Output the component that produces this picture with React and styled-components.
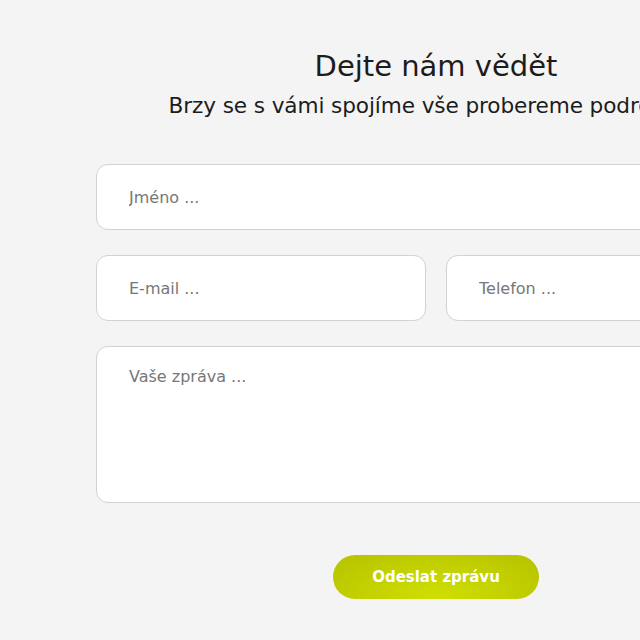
import React from "react";
import styled, { createGlobalStyle } from "styled-components";

const Global = createGlobalStyle`
  html, body { margin: 0; padding: 0; background: #f4f4f4; overflow: hidden; }
  body { font-family: "DejaVu Sans", "Open Sans", sans-serif; }
`;

const Page = styled.div`
  width: 872px;
  min-height: 640px;
  background: #f4f4f4;
  padding-top: 46px;
  box-sizing: border-box;
`;

const Header = styled.header`
  text-align: center;
  color: #1c1c1c;
`;

const Title = styled.h1`
  margin: 0;
  font-size: 29px;
  font-weight: 400;
  line-height: 40px;
`;

const Subtitle = styled.p`
  margin: 3px 0 0;
  font-size: 21.6px;
  font-weight: 400;
  line-height: 34px;
  letter-spacing: -0.1px;
  white-space: nowrap;
`;

const Form = styled.form`
  width: 680px;
  margin: 41px auto 0;
  display: flex;
  flex-direction: column;
  gap: 25px;
`;

const Row = styled.div`
  display: flex;
  gap: 20px;
`;

const Field = styled.input`
  flex: ${(p) => (p.$half ? "1 1 0" : "0 0 auto")};
  min-width: 0;
  height: 66px;
  box-sizing: border-box;
  border: 1px solid #d2d2d2;
  border-radius: 12px;
  background: #fff;
  padding: 0 32px;
  font: inherit;
  font-size: 16px;
  color: #333;
  outline: none;
  &::placeholder { color: #777; }
`;

const Message = styled.textarea`
  height: 157px;
  box-sizing: border-box;
  border: 1px solid #d2d2d2;
  border-radius: 12px;
  background: #fff;
  padding: 20px 32px;
  font: inherit;
  font-size: 16px;
  resize: none;
  outline: none;
  &::placeholder { color: #777; }
`;

const Actions = styled.div`
  display: flex;
  justify-content: center;
  margin-top: 27px;
`;

const Submit = styled.button`
  width: 206px;
  height: 44px;
  border: none;
  border-radius: 22px;
  background: radial-gradient(ellipse at 50% 100%, #cfe000 0%, #c3d100 50%, #b6c200 100%);
  color: #fff;
  font: inherit;
  font-size: 15px;
  font-weight: 700;
  cursor: pointer;
`;

export default function App() {
  return (
    <>
      <Global />
      <Page>
        <Header>
          <Title>Dejte nám vědět</Title>
          <Subtitle>Brzy se s vámi spojíme vše probereme podrobněji</Subtitle>
        </Header>
        <Form onSubmit={(e) => e.preventDefault()}>
          <Field placeholder="Jméno ..." />
          <Row>
            <Field $half placeholder="E-mail ..." />
            <Field $half placeholder="Telefon ..." />
          </Row>
          <Message placeholder="Vaše zpráva ..." />
          <Actions>
            <Submit type="submit">Odeslat zprávu</Submit>
          </Actions>
        </Form>
      </Page>
    </>
  );
}
